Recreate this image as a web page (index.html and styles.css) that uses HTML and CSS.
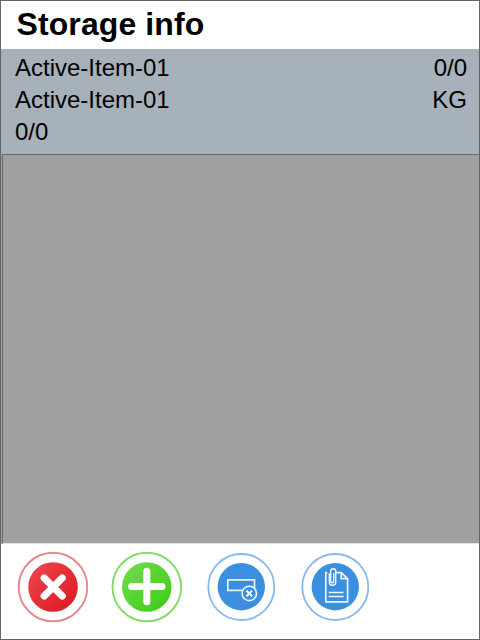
FILE: index.html
```
<!DOCTYPE html>
<html lang="en">
<head>
<meta charset="utf-8">
<title>Storage info</title>
<link rel="stylesheet" href="styles.css">
</head>
<body>
<main class="window">
  <h1 class="title">Storage info</h1>
  <section class="summary">
    <div class="row"><span>Active-Item-01</span><span>0/0</span></div>
    <div class="row"><span>Active-Item-01</span><span>KG</span></div>
    <div class="row"><span>0/0</span></div>
  </section>
  <section class="list"></section>
  <nav class="toolbar">
    <button class="action" aria-label="Cancel">
      <svg viewBox="0 0 72 72" width="72" height="72">
        <defs><linearGradient id="red" x1="0" y1="0" x2="1" y2="1"><stop offset="0" stop-color="#ee4850"/><stop offset="1" stop-color="#dc161e"/></linearGradient></defs>
        <circle cx="36" cy="36" r="34.3" fill="none" stroke="#e6878d" stroke-width="1.9"/>
        <circle cx="36" cy="36" r="24.8" fill="url(#red)"/>
        <path d="M27 27 45 45M45 27 27 45" transform="translate(.2 0)" stroke="#fff" stroke-width="7.2" stroke-linecap="round"/>
      </svg>
    </button>
    <button class="action" aria-label="Add">
      <svg viewBox="0 0 72 72" width="72" height="72">
        <defs><linearGradient id="green" x1="0" y1="0" x2="1" y2="1"><stop offset="0" stop-color="#74dc50"/><stop offset="1" stop-color="#3bcb12"/></linearGradient></defs>
        <circle cx="35.8" cy="36" r="34.3" fill="none" stroke="#83dc63" stroke-width="1.9"/>
        <circle cx="35.8" cy="36" r="24.8" fill="url(#green)"/>
        <path d="M35.8 20.3V50.7M20.6 35.5H51" stroke="#fff" stroke-width="7" stroke-linecap="round"/>
      </svg>
    </button>
    <button class="action" aria-label="Clear field">
      <svg viewBox="0 0 72 72" width="72" height="72">
        <circle cx="36.3" cy="36" r="33" fill="none" stroke="#88b9ed" stroke-width="1.8"/>
        <circle cx="36.3" cy="35.7" r="23.7" fill="#3b8fdf"/>
        <rect x="22.8" y="28.9" width="26.7" height="10.5" fill="none" stroke="#e9f4ff" stroke-width="1.7"/>
        <circle cx="44.3" cy="42.4" r="7.2" fill="#3b8fdf" stroke="#f2f8ff" stroke-width="1.6"/>
        <path d="M41.5 39.6l5.6 5.6M47.1 39.6l-5.6 5.6" stroke="#fff" stroke-width="2"/>
      </svg>
    </button>
    <button class="action" aria-label="Attached documents">
      <svg viewBox="0 0 72 72" width="72" height="72">
        <circle cx="36.3" cy="36" r="33" fill="none" stroke="#88b9ed" stroke-width="1.8"/>
        <circle cx="36.3" cy="35.7" r="23.7" fill="#3b8fdf"/>
        <g fill="none" stroke="#f0f8ff" stroke-width="1.7">
          <path d="M28.3 21.6H26.8V50.8H48.6V27.6L42.2 21.6H35.8M42.2 21.6V27.6H48.6"/>
          <path d="M29.7 41.5H44.5M29.7 45.5H44.5"/>
          <path stroke-width="1.4" d="M34.7 22.3V30.3a1.5 1.5 0 0 1-3 0V20.3a2.5 2.5 0 0 1 5 0V31a3.2 3.2 0 0 1-6.4 0V22.2"/>
        </g>
      </svg>
    </button>
  </nav>
</main>
</body>
</html>
```
FILE: styles.css
```
* {
  box-sizing: border-box;
}

body {
  margin: 0;
  font-family: "Liberation Sans", Arial, sans-serif;
  color: #000;
}

.window {
  display: flex;
  flex-direction: column;
  width: 480px;
  height: 640px;
  border: 1px solid #646464;
  background: #fff;
}

.title {
  flex: 0 0 48px;
  margin: 0;
  padding-left: 15.5px;
  font-size: 32px;
  letter-spacing: 0.1px;
  line-height: 46px;
}

.summary {
  flex: 0 0 105px;
  padding: 3px 12px 0 14px;
  background: #a7b1b9;
  font-size: 24px;
  line-height: 32px;
}

.row {
  display: flex;
  justify-content: space-between;
}

.list {
  flex: 0 0 390px;
  border-top: 1px solid #696969;
  border-left: 1px solid #696969;
  border-bottom: 1px solid #e3e3e3;
  margin-left: 1px;
  background: #a0a0a0;
  box-shadow: -1px 0 #a0a0a0;
}

.toolbar {
  display: flex;
  gap: 22px;
  padding: 7px 0 0 16px;
}

.action {
  width: 72px;
  height: 72px;
  padding: 0;
  border: 0;
  background: none;
}

.action svg {
  display: block;
}
```
